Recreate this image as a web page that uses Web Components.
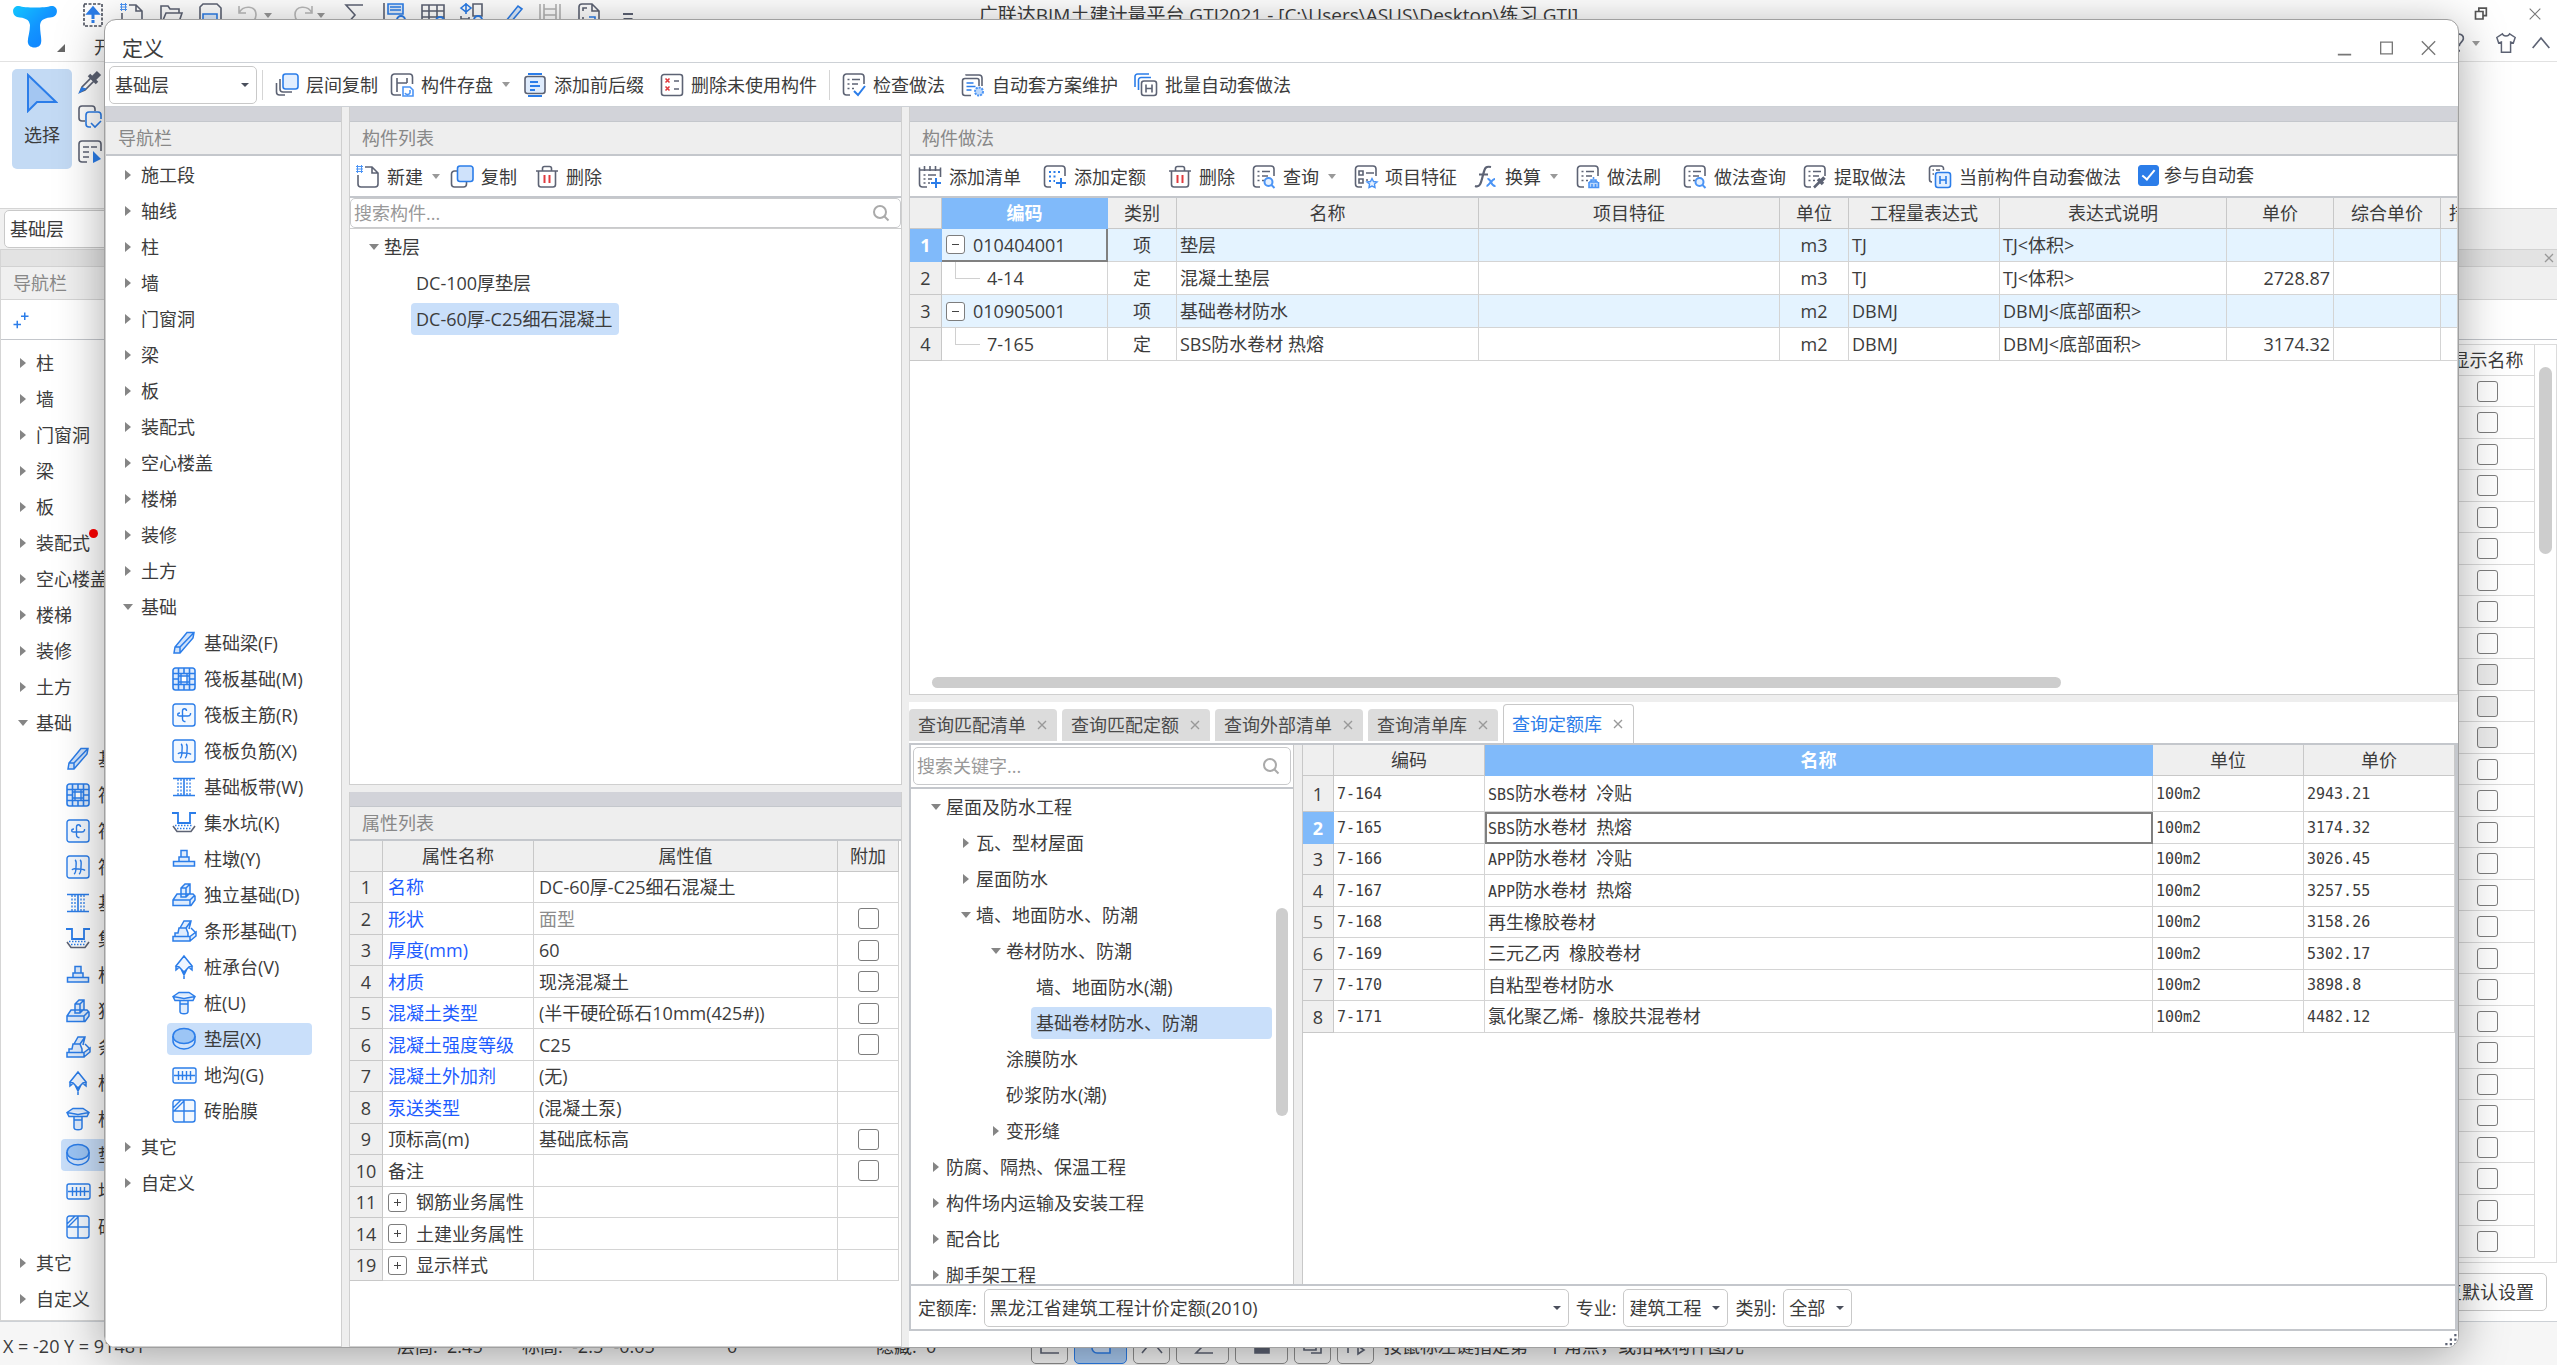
<!DOCTYPE html>
<html lang="zh-CN">
<head>
<meta charset="utf-8">
<title>广联达BIM土建计量平台 GTJ2021</title>
<style>
html, body { margin: 0; height: 100%; overflow: hidden; }
body { font: 18px/24px "Open Sans", "Noto Sans CJK SC", sans-serif; color: #3c3c3c; background: #fff; }
</style>
</head>
<body>
<gtj-app></gtj-app>
<script>
const define = (name, render) => customElements.define(name, class extends HTMLElement {
  connectedCallback() {
    if (this.shadowRoot) return;
    const root = this.attachShadow({ mode: 'open' });
    root.innerHTML = typeof render === 'function' ? render(this) : render;
  }
});

/* ---------- icons ---------- */
const D = '#5d6374', B = '#2b7de9', L = '#dfecfd';
const p = (d, c = D, f = 'none', w = 1.6) => `<path d="${d}" stroke="${c}" fill="${f}" stroke-width="${w}"/>`;
const doc = p('M8 22H4.500a3 3 0 0 1-3-3V4a3 3 0 0 1 3-3h14.500a3 3 0 0 1 3 3v7') ;
const lines = c => p('M5.500 6.500h2M10 6.500h8M5.500 11h2M10 11h6M5.500 15.500h2M10 15.500h2', c);
const lens = `<circle cx="16.500" cy="17" r="4" stroke="#4b94f5" fill="#e6f1ff" stroke-width="2"/>` + p('M19.500 20l3 3', '#4b94f5', 'none', 2);
const newdoc = p('M2 10v9a3 3 0 0 0 3 3h14a3 3 0 0 0 3-3V8l-6-6H9M16 2v6h6') + p('M0 1.500h7M0 4h7M0 6.500h7M1.500 0v8M5.500 0v8', '#4b94f5', 'none', 1);
const trash = p('M1 6h22M3.500 6v13.500a2.500 2.500 0 0 0 2.500 2.500h12a2.500 2.500 0 0 0 2.500-2.500V6M7.500 6V3.500a2 2 0 0 1 2-2h5a2 2 0 0 1 2 2V6') + p('M9.500 10v8M14.500 10v8', '#e03a3e', 'none', 2);
const ICONS = {
  layercopy: p('M8 3.500a2.500 2.500 0 0 1 2.500-2.500h10a2.500 2.500 0 0 1 2.500 2.500v10a2.500 2.500 0 0 1-2.500 2.500h-10a2.500 2.500 0 0 1-2.500-2.500z', B, '#e3efff') + p('M5 6v10a3 3 0 0 0 3 3h9M1.500 10v9a3 3 0 0 0 3 3H10'),
  store: p('M11 22H4.500a3 3 0 0 1-3-3V4a3 3 0 0 1 3-3h15a3 3 0 0 1 3 3v7M7 5v14M7 10h10M17 5v5') + p('M13 14h7l3 3v6H13zM15 20c1 2 4 2 5 0v-3', '#4b94f5'),
  prefix: p('M4.500 3.500h15a2.500 2.500 0 0 1 2.500 2.500v12a2.500 2.500 0 0 1-2.500 2.500h-15A2.500 2.500 0 0 1 2 18V6a2.500 2.500 0 0 1 2.500-2.500z', D, L) + p('M5 1h14M5 23h14M7 9h8M7 13h10M7 17h5', B, 'none', 1.8),
  unused: p('M4 1.500h16a2.500 2.500 0 0 1 2.500 2.500v16a2.500 2.500 0 0 1-2.500 2.500H4A2.500 2.500 0 0 1 1.500 20V4A2.500 2.500 0 0 1 4 1.500zM14 8h5M14 16h5') + p('M5.500 5.500l4 4M9.500 5.500l-4 4M5.500 13.500l4 4M9.500 13.500l-4 4', '#e03a3e'),
  check: doc + lines(D) + p('M12 18l4 4 7-9', B, 'none', 2),
  auto: p('M4 5.500h12a2 2 0 0 1 2 2V13M10 22.500H4a2.500 2.500 0 0 1-2.500-2.500V8A2.500 2.500 0 0 1 4 5.500M5 2.500V2h13a3 3 0 0 1 3 3v8') + p('M5.500 10h7M5.500 13.500h9M5.500 17h5', B) + `<circle cx="18" cy="18.500" r="4" stroke="#4b94f5" fill="#bcd8fb" stroke-width="2" stroke-dasharray="2 1"/>`,
  batch: p('M1 14V3.500A2.500 2.500 0 0 1 3.500 1H15M4.500 17V7A2.500 2.500 0 0 1 7 4.500h10', B) + p('M10 8h10a2.500 2.500 0 0 1 2.500 2.500V20a2.500 2.500 0 0 1-2.500 2.500H10A2.500 2.500 0 0 1 7.500 20v-9.500A2.500 2.500 0 0 1 10 8zM12 11.500v8M18 11.500v8M12 15.500h6'),
  newdoc, trash,
  copy: p('M8 6H4.500a3 3 0 0 0-3 3v10a3 3 0 0 0 3 3h9a3 3 0 0 0 3-3v-2') + p('M10 1h10.500A2.500 2.500 0 0 1 23 3.500V14a2.500 2.500 0 0 1-2.500 2.500H10A2.500 2.500 0 0 1 7.500 14V3.500A2.500 2.500 0 0 1 10 1z', B, '#cfe2fb'),
  addlist: p('M9 22H4.500a3 3 0 0 1-3-3V5h21v7M1.500 5V2.500M6.500 6V1M12 6V1M17.500 6V1M22.500 5V2.500M5.500 10h2M10 10h8M5.500 14h2M10 14h4M5.500 18h2M10 18h2') + p('M18 13v10M13 18h10', B, 'none', 2),
  addquota: doc + `<g stroke-dasharray="2 2.500">${p('M6 7h13M6 11.500h9M6 16h6', B, 'none', 2)}</g>` + p('M18 13v10M13 18h10', B, 'none', 2),
  query: doc + lines(D) + lens,
  feature: doc + p('M5 6h4v4H5zM5 14h4v4H5zM12 8h8M12 15h2') + p('M18 13.500l1.500 3 3.500.500-2.500 2 .500 3.500-3-1.500-3 1.500.500-3.500-2.500-2 3.500-.500z', '#4b94f5', '#e6f1ff', 1.4),
  fx: p('M1 21c5 2 6-3 8-11s3-9 8-8M5 9.500h9', D, 'none', 2.2) + p('M13.500 14c4-1 3 8 8 7M21 14c-3 0-6 7-8.500 7', '#4b94f5', 'none', 2),
  brush: doc + lines(D) + p('M13 17h9M15 17v-2h5v2M13 17v5.500h9.500V17M16 19v3M19.500 19v3M17.500 14v-2', '#4b94f5', '#bcd8fb'),
  extract: doc + lines(D) + p('M11 22.500l6-6', D, 'none', 2.500) + p('M15 14l5 5M17.500 16.500l4-4', D, 'none', 3.5),
  current: p('M4 17a2.500 2.500 0 0 1-2.500-2.500V3.500A2.500 2.500 0 0 1 4 1h9a2.500 2.500 0 0 1 2.500 2.500V5M4.500 5h1.500M8 5h4M4.500 9h1.500') + p('M10 7.500h10a2.500 2.500 0 0 1 2.500 2.500v10a2.500 2.500 0 0 1-2.500 2.500H10A2.500 2.500 0 0 1 7.500 20V10A2.500 2.500 0 0 1 10 7.500zM12 11v8M18 11v8M12 15h6', B, '#e3efff'),
  search: `<circle cx="11" cy="11" r="6" stroke="#aaa" fill="none" stroke-width="2"/>` + p('M15.500 15.500l4 4', '#aaa', 'none', 2),
  beam: p('M2 22l1-6L15 1.500h7L21 7 8 22zM2.500 16H8v6M8 16L22 1.500', B, '#cfe2fb', 1.5),
  raft: p('M3.500 1h17A2.500 2.500 0 0 1 23 3.500v17a2.500 2.500 0 0 1-2.500 2.500h-17A2.500 2.500 0 0 1 1 20.500v-17A2.500 2.500 0 0 1 3.500 1z', B, '#dceafc', 1.6) + p('M6.500 1v22M17.500 1v22M1 6.500h22M1 17.500h22M1 12h5M18 12h5M12 1v5M12 18v5', B, 'none', 1.6) + p('M9 9h6v6H9zM6.500 9H9M15 9h2.500M6.500 15H9M15 15h2.500M9 6.500V9M15 6.500V9M9 15v2.500M15 15v2.500', B, '#fff', 1.4),
  rebar: p('M3.500 1h17A2.500 2.500 0 0 1 23 3.500v17a2.500 2.500 0 0 1-2.500 2.500h-17A2.500 2.500 0 0 1 1 20.500v-17A2.500 2.500 0 0 1 3.500 1zM14.500 8c0-3-4-3-4 0v8c0 3 3 2.500 3 2.500M8 10c-3 0-3 3.500 0 3h8c3 0 2.500-3 2.500-3', B, '#f2f8ff', 1.4),
  negrebar: p('M3.500 1h17A2.500 2.500 0 0 1 23 3.500v17a2.500 2.500 0 0 1-2.500 2.500h-17A2.500 2.500 0 0 1 1 20.500v-17A2.500 2.500 0 0 1 3.500 1zM9 5c2 1 1 4 1 7s0 6-2 7M14 5c2 1 1 4 1 7s0 6-2 7M6 15c1-2 3-1 6-1s6 0 7 1.500', B, '#f2f8ff', 1.4),
  strip: p('M1 3.500h22M1 20.500h22M12 4v16', B) + `<g stroke-dasharray="2 1.500">${p('M6 4v16M9 4v16M15 4v16M18 4v16', B, 'none', 1.3)}</g>`,
  pit: p('M0 2h6v10h12V2h6', B, 'none', 1.8) + p('M1 15l4 5.500h14l4-5.500', D) + `<g stroke-dasharray="1.500 1.500">${p('M3 14.500h18M5 17.500h14', B)}</g>`,
  pier: p('M1.500 14.500h21v4.500h-21zM7 14.500V10h10v4.500M9 10V3.500h6V10', B, L, 1.5),
  isolated: p('M1 17l4-6h16l2 2v4l-4 5.500H1zM1 17h17v5M18 17l5-5M9 14V5l4-4h5v9l-4 4zM9 5h5v9M14 5l4-4', B, L, 1.5),
  footing: p('M1 17.500h17v4.500H1zM18 17.500l6-4.500v4l-6 5M3 17.500V14h3l1-5h7l2 5v3.500M8 9l4-7h7l-2 8M14 9l5-7M19 9l4 4', B, L, 1.5),
  pilecap: p('M12 1l8 10-3 1-5 5-5-5-3-1zM12 17v7M4 11v4l2.500-2M20 11v4l-2.500-2M9 14l3 6 3-6', B, '#eef5ff', 1.5),
  pile: p('M1 5.500l6-4h10l6 4-2 4H3zM1 5.500l11 2 11-2M8 9.500v11c0 3 8 3 8 0v-11zM8 13h8', B, L, 1.5),
  cushion: `<path d="M1 9v5c0 4 5 8 11 8s11-4 11-8V9" stroke="${B}" fill="#cfe2fb" stroke-width="1.500"/><ellipse cx="12" cy="9" rx="11" ry="7.500" stroke="${B}" fill="#9cc5f5" stroke-width="1.500"/>`,
  trench: p('M3 5h19a2 2 0 0 1 2 2v11a2 2 0 0 1-2 2H3a2 2 0 0 1-2-2V7a2 2 0 0 1 2-2zM6.500 8v9M10.500 8v9M14.500 8v9M18.500 8v9M2 12.500h21', B, '#f2f8ff', 1.4),
  brick: p('M3.500 1h17A2.500 2.500 0 0 1 23 3.500v17a2.500 2.500 0 0 1-2.500 2.500h-17A2.500 2.500 0 0 1 1 20.500v-17A2.500 2.500 0 0 1 3.500 1zM12 1v22M1 12h22M1 9l8-8M2 12L12 2', B, '#f2f8ff', 1.4),
  upload: `<g stroke-dasharray="3 1.500">${p('M3 1h18v22H3z', '#4a4f5c')}</g>` + p('M12 20v-3M12 16V8', B, 'none', 3) + p('M6 11l6-7 6 7z', B, B),
  folder: p('M2 22V3h7l2 3h9v4M2 22l5-12h16l-4 12z'),
  save: p('M2 22V4l3-3h14l4 4v17M6 1h12M6 22V12h12v10') + p('M5 11h14v11H5z', B, L),
  undo: p('M2 3v7h7M2 10c4-8 17-8 17 2 0 5-4 8-9 8', '#bbb'),
  redo: p('M22 3v7h-7M22 10C18 2 5 2 5 12c0 5 4 8 9 8', '#bbb'),
  sigma: p('M20 2H3l9 10-9 10h17'),
  measure: p('M2 0v22h20') + p('M6 1h15v10H6zM8 4h11M8 7h11', B, L) + `<circle cx="19" cy="17" r="4" fill="none" stroke="${B}" stroke-width="2"/>`,
  grid: p('M1 2h22v20H1zM1 8h22M1 14h22M8 2v20M16 2v20') + `<circle cx="19" cy="18" r="4" fill="#fff" stroke="${B}" stroke-width="2"/>`,
  find: p('M13 1h9v12h-9zM1 13v9h8v-8M1 16h8') + p('M6 0v11M1 5l5-4 5 4-5 4z', B) + `<circle cx="18" cy="17" r="4" fill="#fff" stroke="${B}" stroke-width="2"/>`,
  edit: p('M7 18L19 3l4 3L11 20l-5 1z', B, L) + p('M1 20c2-5 3 2 5 1'),
  film: p('M2 1v22M22 1v22M6 1v22M18 1v22M6 6h12M6 12h12M6 18h12', '#b5b5b5'),
  scan: p('M9 22H5a3 3 0 0 1-3-3V4a3 3 0 0 1 3-3h10l7 7v11M15 1v7h7M6 8V5h4M6 14v4h4') + p('M12 14h6v6', B),
  more: p('M7 11h10', D, 'none', 2) + `<path d="M7 15h10l-5 5z" fill="${D}"/>`,
  dropper: p('M2 22l2-5 9-9 3 3-9 9z', D, '#fff') + p('M11 5l8 8', D, 'none', 3.5) + p('M15 9l6-6', D, 'none', 6) + p('M2 22l2-4 3 1z', B, B),
  picks: p('M7 16H4a3 3 0 0 1-3-3V4a3 3 0 0 1 3-3h10a3 3 0 0 1 3 3v2') + p('M13 22h-2a3 3 0 0 1-3-3v-9a3 3 0 0 1 3-3h9a3 3 0 0 1 3 3v4M13 18l4 4 6-6', B),
  listpick: p('M9 22H4a3 3 0 0 1-3-3V4a3 3 0 0 1 3-3h16a3 3 0 0 1 3 3v7M5 7h6M13 7h6M5 12h6M5 17h6') + `<path d="M15 11l8 8-8 4z" fill="${B}"/>`,
  sparkle: p('M17 2v10M12 7h10M7 13v10M2 18h10', B, 'none', 2),
  shirt: p('M8 2c1 3 7 3 8 0l6 4-2 6-3-1v11H7V11l-3 1-2-6z'),
  help: p('M5 7c0-8 12-7 11 0-.500 4-5 4-5 9M11 20v2.500', D, 'none', 2) ,
  chevron: p('M2 18L12 6l10 12', D, 'none', 2),
  min: p('M1 20h16', '#777', 'none', 2),
  max: p('M2 5h14v14H2z', '#777'),
  close: p('M1 4l16 16M17 4L1 20', '#777'),
  restore: p('M3 9h9v9H3zM7 9V5h9v9h-4', '#555', 'none', 2),
  x: p('M6 6l12 12M18 6L6 18', '#999', 'none', 2),
  grip: `<g fill="#5d6374"><path d="M19 4h3v3h-3zM13 10h3v3h-3zM19 10h3v3h-3zM7 16h3v3H7zM13 16h3v3h-3zM19 16h3v3h-3z"/></g>`,
  s1: p('M3 5v14h18M3 12h14'), s2: p('M3 5h13a5 5 0 0 1 5 5v9H8a5 5 0 0 1-5-5z', B, '#cfe2fb'), s3: p('M2 19L12 7l10 12'),
  s4: p('M20 4L5 19h17'), s5: p('M5 7h14v12H5z', D, D), s6: p('M3 6h12v10H3zM8 10h12v9H10'), s7: p('M4 19V6h12M14 12v8l6-4z')
};
define('ui-icon', el => `<style>
:host { display: block; flex: none; width: 24px; height: 24px; }
svg { display: block; width: 100%; height: 100%; overflow: visible; }
</style><svg viewBox="0 0 24 24" aria-hidden="true">${ICONS[el.getAttribute('name')] || ''}</svg>`);

define('ui-caret', `<style>
:host { display: flex; align-items: center; justify-content: center; flex: none; width: 11px; }
i { border: 4px solid transparent; border-top: 5px solid #999; border-bottom: 0; }
</style><i></i>`);

/* ---------- controls ---------- */
define('tool-button', el => `<style>
:host { display: block; flex: none; margin-right: var(--gap-s, 16px); }
:host([wide]) { margin-right: var(--gap-l, 22px); }
button { all: unset; display: flex; align-items: center; white-space: nowrap; }
ui-icon { margin-right: 7px; }
ui-caret { margin-left: 7px; }
</style><button type="button"><ui-icon name="${el.getAttribute('icon')}"></ui-icon><slot></slot>${el.hasAttribute('menu') ? '<ui-caret></ui-caret>' : ''}</button>`);

define('ui-select', el => `<style>
:host { display: flex; align-items: center; gap: 7px; flex: none; }
.box { display: grid; width: var(--w, 148px); height: 38px; }
select { grid-area: 1/1; appearance: none; box-sizing: border-box; width: 100%; margin: 0; padding: 0 0 0 5px; font: inherit; color: inherit; background: #fff; border: 1px solid #c9c9c9; border-radius: 5px; outline: 0; }
i { grid-area: 1/1; justify-self: end; align-self: center; margin-right: 8px; border: 4px solid transparent; border-top: 4px solid #4a4f5c; border-bottom: 0; pointer-events: none; }
</style>${el.hasAttribute('label') ? `<label for="s">${el.getAttribute('label')}</label>` : ''}<span class="box"><select id="s" ${el.hasAttribute('label') ? '' : 'aria-label="楼层"'}><option>${el.getAttribute('value')}</option></select><i></i></span>`);

define('search-box', el => `<style>
:host { display: block; }
div { display: flex; align-items: center; box-sizing: border-box; height: var(--h, 30px); padding: 0 7px 0 3px; border: 1px solid #c9cacc; border-radius: 5px; background: #fff; }
input { flex: 1; min-width: 0; border: 0; outline: 0; padding: 0; font: inherit; background: none; }
input::placeholder { color: #999; opacity: 1; }
</style><div><input type="search" aria-label="${el.getAttribute('hint')}" placeholder="${el.getAttribute('hint')}"><ui-icon name="search"></ui-icon></div>`);

const CHECK_CSS = `
input[type=checkbox] { appearance: none; display: block; box-sizing: border-box; flex: none; width: 21px; height: 21px; margin: 0 auto; border: 1px solid #7d7d7d; border-radius: 3px; background: #fff; }
input[type=checkbox]:disabled { background: #ececec; }
input[type=checkbox]:checked { display: grid; place-content: center; background: #2b7de9; border-color: #2b7de9; }
input[type=checkbox]:checked::after { content: ""; width: 5px; height: 11px; border: solid #fff; border-width: 0 2px 2px 0; rotate: 40deg; translate: 0 -2px; }`;
define('ui-check', `<style>${CHECK_CSS}
:host { display: block; flex: none; align-self: flex-start; margin-top: 6px; }
label { display: flex; align-items: center; gap: 5px; }
</style><label><input type="checkbox" checked><slot></slot></label>`);

/* ---------- tree ---------- */
const NAV = ['柱', '墙', '门窗洞', '梁', '板', '装配式', '空心楼盖', '楼梯', '装修', '土方'].map(t => [0, t, 'r']);
const BASE = [[0, '基础', 'd'],
  ...[['基础梁(F)', 'beam'], ['筏板基础(M)', 'raft'], ['筏板主筋(R)', 'rebar'], ['筏板负筋(X)', 'negrebar'], ['基础板带(W)', 'strip'], ['集水坑(K)', 'pit'], ['柱墩(Y)', 'pier'], ['独立基础(D)', 'isolated'], ['条形基础(T)', 'footing'], ['桩承台(V)', 'pilecap'], ['桩(U)', 'pile'], ['垫层(X)', 'cushion', 1], ['地沟(G)', 'trench'], ['砖胎膜', 'brick']].map(([t, i, s]) => [1, t, '', s, i]),
  [0, '其它', 'r'], [0, '自定义', 'r']];
const TREES = {
  main: [...NAV, ...BASE],
  nav: [[0, '施工段', 'r'], [0, '轴线', 'r'], ...NAV, ...BASE],
  parts: [[0, '垫层', 'd'], [1, 'DC-100厚垫层', ''], [1, 'DC-60厚-C25细石混凝土', '', 1]],
  quota: [[0, '屋面及防水工程', 'd'], [1, '瓦、型材屋面', 'r'], [1, '屋面防水', 'r'], [1, '墙、地面防水、防潮', 'd'], [2, '卷材防水、防潮', 'd'], [3, '墙、地面防水(潮)', ''], [3, '基础卷材防水、防潮', '', 1], [2, '涂膜防水', ''], [2, '砂浆防水(潮)', ''], [2, '变形缝', 'r'], [0, '防腐、隔热、保温工程', 'r'], [0, '构件场内运输及安装工程', 'r'], [0, '配合比', 'r'], [0, '脚手架工程', 'r']]
};
define('tree-view', el => {
  const kind = el.getAttribute('data');
  return `<style>
:host { display: block; overflow: hidden; }
ul { list-style: none; margin: 0; padding: 0; }
li { display: flex; align-items: center; height: 36px; padding-left: calc(var(--pad) + var(--lv) * var(--step)); white-space: nowrap; }
.tw { flex: none; display: flex; justify-content: center; width: var(--tw); }
.r i { display: block; border: 5px solid transparent; border-left: 6px solid #858585; border-right: 0; }
.d i { display: block; border: 5px solid transparent; border-top: 6px solid #858585; border-bottom: 0; }
.it { display: flex; align-items: center; gap: 8px; height: 32px; margin-left: -5px; padding: 0 6px 0 5px; border-radius: 4px; }
.on { background: #c9dffa; }
.fill .on { flex: 1; margin-right: var(--end); }
.dot { align-self: flex-start; width: 9px; height: 9px; margin: 4px 0 0 -7px; border-radius: 50%; background: #f00; }
</style><ul class="${kind === 'parts' ? '' : 'fill'}">${TREES[kind].map(([lv, t, a, on, ic]) =>
    `<li style="--lv:${lv}"><span class="tw ${a}">${a ? '<i></i>' : ''}</span><span class="it ${on ? 'on' : ''}">${ic ? `<ui-icon name="${ic}"></ui-icon>` : ''}<span>${t}</span></span>${kind === 'main' && t === '装配式' ? '<span class="dot"></span>' : ''}</li>`).join('')}</ul>`;
});

/* ---------- docked pane ---------- */
define('dock-pane', el => `<style>
:host { display: flex; flex-direction: column; min-height: 0; min-width: 0; background: #fff; border: 1px solid #cfcfcf; border-top: 0; box-sizing: border-box; overflow: hidden; }
.strip { flex: none; height: 15px; background: #d2d3d9; border-bottom: 1px solid #c4c7cc; box-sizing: border-box; }
h2 { flex: none; margin: 0; padding: 0 12px; font: inherit; line-height: 32px; color: #888; background: #eee; border-bottom: 2px solid #c4c7cc; }
</style><div class="strip"></div><h2>${el.getAttribute('head')}</h2><slot></slot>`);

/* ---------- tables ---------- */
const TABLE_CSS = `
table { border-collapse: separate; border-spacing: 0; table-layout: fixed; width: 100%; }
th, td { box-sizing: border-box; padding: 0 3px; border: solid #d4d4d4; border-width: 0 1px 1px 0; font-weight: 400; text-align: left; white-space: nowrap; overflow: hidden; height: inherit; }
thead th { text-align: center; background: #efefef; border-color: #c8c8c8; padding: 0; }
tbody th { text-align: center; background: #efefef; border-color: #c8c8c8; padding: 0; }
thead th.hot { background: #80bafa; border-color: #80bafa; color: #fff; font-weight: 700; }
tbody th.hot { background: #80bafa; border-color: #80bafa; color: #fff; font-weight: 700; }
.c { text-align: center; } .n { text-align: right; }
.box { flex: none; display: inline-grid; place-content: center; box-sizing: border-box; width: 19px; height: 19px; border: 1px solid #7d7d7d; border-radius: 3px; background: #fff; }
.box::before { content: ""; grid-area: 1/1; width: 7px; height: 1px; background: #444; align-self: center; }
.box.plus::after { content: ""; grid-area: 1/1; width: 1px; height: 7px; background: #444; justify-self: center; }
.row { display: flex; align-items: center; }`;

define('method-table', () => {
  const rows = [['010404001', '项', '垫层', 'm3', 'TJ', 'TJ&lt;体积&gt;', '', 1], ['4-14', '定', '混凝土垫层', 'm3', 'TJ', 'TJ&lt;体积&gt;', '2728.87', 0], ['010905001', '项', '基础卷材防水', 'm2', 'DBMJ', 'DBMJ&lt;底部面积&gt;', '', 1], ['7-165', '定', 'SBS防水卷材 热熔', 'm2', 'DBMJ', 'DBMJ&lt;底部面积&gt;', '3174.32', 0]];
  return `<style>${TABLE_CSS}
:host { display: block; flex: 1; overflow: hidden; }
table { width: 1621px; }
thead tr { height: 31px; } tbody tr { height: 33px; }
tr.g td { background: #e4f3ff; }
td.code { padding: 0; }
.g .row { padding-left: 4px; gap: 8px; }
.sub { height: 32px; padding-left: 13px; gap: 7px; }
.sub i { align-self: flex-start; width: 24px; height: 16px; border: solid #d0d0d0; border-width: 0 0 1px 1px; }
tr:first-child td.code { border-right: 2px solid #808080; border-bottom: 2px solid #808080; }
th:last-child { text-align: left; padding-left: 8px; }
</style><table><colgroup>${[32, 166, 69, 302, 301, 69, 151, 227, 107, 107, 90].map(w => `<col style="width:${w}px">`).join('')}</colgroup>
<thead><tr><th></th><th class="hot">编码</th>${['类别', '名称', '项目特征', '单位', '工程量表达式', '表达式说明', '单价', '综合单价', '措施项目'].map(t => `<th>${t}</th>`).join('')}</tr></thead>
<tbody>${rows.map((r, i) => `<tr class="${r[7] ? 'g' : ''}"><th class="${i ? '' : 'hot'}">${i + 1}</th><td class="code">${r[7] ? `<div class="row"><span class="box"></span>${r[0]}</div>` : `<div class="row sub"><i></i>${r[0]}</div>`}</td><td class="c">${r[1]}</td><td>${r[2]}</td><td></td><td class="c">${r[3]}</td><td>${r[4]}</td><td>${r[5]}</td><td class="n">${r[6]}</td><td></td><td></td></tr>`).join('')}</tbody></table>`;
});

define('prop-table', () => {
  const rows = [[1, '名称', 'DC-60厚-C25细石混凝土', 0, 1], [2, '形状', '面型', 1, 1], [3, '厚度(mm)', '60', 1, 1], [4, '材质', '现浇混凝土', 1, 1], [5, '混凝土类型', '(半干硬砼砾石10mm(425#))', 1, 1], [6, '混凝土强度等级', 'C25', 1, 1], [7, '混凝土外加剂', '(无)', 0, 1], [8, '泵送类型', '(混凝土泵)', 0, 1], [9, '顶标高(m)', '基础底标高', 1, 0], [10, '备注', '', 1, 0], [11, '钢筋业务属性'], [14, '土建业务属性'], [19, '显示样式']];
  return `<style>${TABLE_CSS}${CHECK_CSS}
:host { display: block; flex: 1; overflow: hidden; padding-right: 2px; }
tr { height: 31px; } tbody tr:nth-child(even) { height: 32px; }
td { padding: 0 5px; }
.blue { color: #1d5cff; } .off { color: #8c8c8c; }
.row { gap: 9px; }
</style><table><colgroup><col style="width:33px"><col style="width:151px"><col><col style="width:61px"></colgroup>
<thead><tr><th></th><th>属性名称</th><th>属性值</th><th>附加</th></tr></thead>
<tbody>${rows.map(([n, k, v, c, b]) => `<tr><th>${n}</th><td class="${b ? 'blue' : ''}">${v === undefined ? `<div class="row"><span class="box plus"></span>${k}</div>` : k}</td><td class="${n === 2 ? 'off' : ''}">${v || ''}</td><td>${c ? `<input type="checkbox" aria-label="附加 ${k}">` : ''}</td></tr>`).join('')}</tbody></table>`;
});

define('quota-table', () => {
  const rows = [['SBS', '防水卷材', '冷贴', '2943.21'], ['SBS', '防水卷材', '热熔', '3174.32'], ['APP', '防水卷材', '冷贴', '3026.45'], ['APP', '防水卷材', '热熔', '3257.55'], ['', '再生橡胶卷材', '', '3158.26'], ['', '三元乙丙', '橡胶卷材', '5302.17'], ['', '自粘型卷材防水', '', '3898.8'], ['', '氯化聚乙烯-', '橡胶共混卷材', '4482.12']];
  return `<style>${TABLE_CSS}
:host { display: block; flex: 1; min-width: 0; overflow: hidden; background: #fff; border-left: 1px solid #c8c8c8; }
tr { height: 31px; } tbody tr:nth-child(even) { height: 32px; } tbody tr:first-child { height: 36px; }
td.m, .m { font-family: "DejaVu Sans Mono", monospace; font-size: 15px; }
tr:nth-child(2) td.nm { outline: 2px solid #808080; outline-offset: -2px; }
</style><table><colgroup><col style="width:31px"><col style="width:151px"><col><col style="width:151px"><col style="width:151px"></colgroup>
<thead><tr><th></th><th>编码</th><th class="hot">名称</th><th>单位</th><th>单价</th></tr></thead>
<tbody>${rows.map((r, i) => `<tr><th class="${i === 1 ? 'hot' : ''}">${i + 1}</th><td class="m">7-${164 + i}</td><td class="nm">${r[0] ? `<span class="m">${r[0]}</span>` : ''}${r[1]}${r[2] ? `<span class="m"> </span>${r[2]}` : ''}</td><td class="m">100m2</td><td class="m">${r[3]}</td></tr>`).join('')}</tbody></table>`;
});

/* ---------- query area ---------- */
define('query-tabs', () => `<style>
:host { display: flex; align-items: flex-end; gap: 5px; flex: none; height: 41px; background: #fff; }
button { all: unset; display: flex; align-items: center; gap: 8px; height: 32px; margin-bottom: 2px; padding: 0 7px 0 9px; background: #dcdcdc; border-radius: 4px 4px 0 0; color: #4a4a4a; }
button[aria-selected=true] { height: 38px; margin-bottom: 0; padding: 0 7px 0 8px; background: #fff; color: #2b7de9; border: 1px solid #c8c8c8; border-bottom: 0; }
ui-icon { width: 16px; height: 16px; }
</style>${['查询匹配清单', '查询匹配定额', '查询外部清单', '查询清单库', '查询定额库'].map((t, i) => `<button role="tab" aria-selected="${i === 4}">${t}<ui-icon name="x"></ui-icon></button>`).join('')}`);

define('query-pane', `<style>
:host { display: flex; flex-direction: column; min-height: 0; background: #fff; }
.frame { flex: 1; min-height: 0; display: flex; flex-direction: column; border: solid #c4c7cc; border-width: 2px 3px 2px 2px; }
.mid { flex: 1; min-height: 0; display: flex; background: #eee; gap: 8px; }
.side { flex: none; width: 383px; display: flex; flex-direction: column; background: #fff; border-right: 1px solid #c8c8c8; box-sizing: border-box; }
search-box { --h: 38px; padding: 2px; border-bottom: 2px solid #c4c7cc; }
.wrap { flex: 1; min-height: 0; display: flex; }
tree-view { flex: 1; --pad: 15px; --step: 30px; --tw: 20px; --end: 4px; }
.bar { flex: none; width: 12px; margin-right: 5px; }
.bar i { display: block; height: 42%; border-radius: 6px; background: #cdcdcd; }
.bar::before { content: ""; display: block; height: 24%; }
.foot { flex: none; display: flex; align-items: center; gap: 7px; height: 43px; padding-left: 7px; border-top: 2px solid #c4c7cc; }
.grip { flex: none; display: flex; justify-content: flex-end; height: 16px; }
.grip ui-icon { width: 18px; height: 18px; }
</style><query-tabs role="tablist"></query-tabs>
<div class="frame"><div class="mid"><div class="side"><search-box hint="搜索关键字..."></search-box><div class="wrap"><tree-view data="quota"></tree-view><div class="bar"><i></i></div></div></div><quota-table></quota-table></div>
<div class="foot"><ui-select label="定额库:" value="黑龙江省建筑工程计价定额(2010)" style="--w:585px"></ui-select><ui-select label="专业:" value="建筑工程" style="--w:105px"></ui-select><ui-select label="类别:" value="全部" style="--w:69px"></ui-select></div></div>
<div class="grip"><ui-icon name="grip"></ui-icon></div>`);

/* ---------- definition window ---------- */
define('define-window', `<style>
:host { display: flex; flex-direction: column; box-sizing: border-box; border: 1px solid #a0a0a0; border-radius: 12px; overflow: hidden; background: #fff; box-shadow: 0 8px 48px rgba(0,0,0,.34); }
header { flex: none; display: flex; align-items: center; height: 42px; padding: 14px 17px 0 17px; box-sizing: border-box; }
h1 { flex: 1; margin: 0; font: inherit; font-size: 21px; }
header button { all: unset; margin-left: 22px; }
header ui-icon { width: 20px; height: 24px; }
.tools { flex: none; display: flex; align-items: center; }
.top { height: 43px; padding-left: 4px; border: solid #cdd1d6; border-width: 1px 0; --gap-s: 12px; --gap-l: 16px; box-sizing: content-box; }
.sep { width: 1px; height: 30px; margin-right: 12px; background: #d5d5d5; }
.top ui-select { margin-right: 5px; }
.body { flex: 1; min-height: 0; display: grid; grid-template-columns: 237px 553px minmax(0, 1fr); gap: 7px; background: #eee; }
.col { display: grid; min-height: 0; gap: 7px; }
.left { grid-template-rows: minmax(0, 55fr) minmax(0, 45fr); }
.right { grid-template-rows: minmax(0, 477fr) minmax(0, 523fr); }
.pt { height: 39px; padding: 1px 0 0 6px; border-bottom: 2px solid #c4c7cc; --gap-s: 9px; --gap-l: 18px; }
.mt { height: 39px; padding: 1px 0 0 8px; border-bottom: 2px solid #c4c7cc; --gap-s: 17px; }
.nav { padding-top: 1px; --pad: 8px; --step: 31px; --tw: 27px; --end: 29px; }
.parts { flex: 1; border-top: 1px solid #cfcfcf; --pad: 14px; --step: 32px; --tw: 20px; }
.hbar { flex: none; padding: 0 0 6px 22px; }
.hbar i { display: block; width: 74%; height: 11px; border-radius: 6px; background: #cdcdcd; }
</style>
<header><h1>定义</h1><button aria-label="最小化"><ui-icon name="min"></ui-icon></button><button aria-label="最大化"><ui-icon name="max"></ui-icon></button><button aria-label="关闭"><ui-icon name="close"></ui-icon></button></header>
<div class="tools top"><ui-select value="基础层"></ui-select><span class="sep"></span><tool-button icon="layercopy">层间复制</tool-button><tool-button icon="store" menu>构件存盘</tool-button><tool-button icon="prefix" wide>添加前后缀</tool-button><tool-button icon="unused">删除未使用构件</tool-button><span class="sep"></span><tool-button icon="check" wide>检查做法</tool-button><tool-button icon="auto" wide>自动套方案维护</tool-button><tool-button icon="batch">批量自动套做法</tool-button></div>
<div class="body">
<dock-pane head="导航栏"><tree-view class="nav" data="nav"></tree-view></dock-pane>
<div class="col left">
<dock-pane head="构件列表"><div class="tools pt"><tool-button icon="newdoc" menu>新建</tool-button><tool-button icon="copy" wide>复制</tool-button><tool-button icon="trash">删除</tool-button></div><search-box hint="搜索构件..."></search-box><tree-view class="parts" data="parts"></tree-view></dock-pane>
<dock-pane head="属性列表"><prop-table></prop-table></dock-pane>
</div>
<div class="col right">
<dock-pane head="构件做法"><div class="tools mt"><tool-button icon="addlist" wide>添加清单</tool-button><tool-button icon="addquota" wide>添加定额</tool-button><tool-button icon="trash">删除</tool-button><tool-button icon="query" menu>查询</tool-button><tool-button icon="feature">项目特征</tool-button><tool-button icon="fx" menu>换算</tool-button><tool-button icon="brush" wide>做法刷</tool-button><tool-button icon="query">做法查询</tool-button><tool-button icon="extract" wide>提取做法</tool-button><tool-button icon="current">当前构件自动套做法</tool-button><ui-check>参与自动套</ui-check></div><method-table></method-table><div class="hbar"><i></i></div></dock-pane>
<query-pane></query-pane>
</div>
</div>`);

/* ---------- application behind the window ---------- */
define('app-header', () => `<style>
:host { display: grid; grid-template-columns: 1fr auto 1fr; height: 61px; border-bottom: 1px solid #e2e2e2; }
.l { display: flex; }
.logo { flex: none; display: flex; align-items: flex-end; width: 81px; }
.logo svg { width: 44px; height: 44px; margin: 0 0 12px 13px; }
.logo i { margin-bottom: 9px; border: 4px solid transparent; border-right-color: #666; border-bottom-color: #666; }
.quick { display: flex; gap: 15px; padding-top: 3px; }
.quick span { display: flex; }
.quick ui-caret { width: 14px; }
.tab { padding: 8px 0 0 13px; }
.title { padding-top: 3px; font-size: 19px; white-space: nowrap; }
.r { display: flex; flex-direction: column; align-items: flex-end; gap: 7px; }
.r div { display: flex; align-items: center; }
.win { gap: 36px; padding: 3px 12px 0 0; } .hp { gap: 13px; padding-right: 6px; }
.win ui-icon { width: 20px; height: 22px; }
.win ui-icon:last-child { width: 16px; height: 16px; }
.hp span { display: flex; }
.hp ui-icon { width: 20px; height: 20px; } .hp .s { width: 24px; height: 22px; }
</style><div class="l"><div class="logo"><svg viewBox="0 0 44 44" aria-hidden="true"><defs><linearGradient id="g" x1="0" y1="0" x2="1" y2="1"><stop offset="0" stop-color="#12c6ff"/><stop offset=".5" stop-color="#1295ff"/><stop offset="1" stop-color="#0f7bff"/></linearGradient></defs><path fill="url(#g)" d="M6 1C12 3 32 3 38 1c7-1 8 9 2 11-8 1-12 2-13 8 0 8 2 14 1 18-1 6-12 6-13 0-1-4 2-10 2-18-1-6-5-7-13-8C-2 10-1 0 6 1z"/></svg><i></i></div><div><div class="quick">${['upload', 'newdoc', 'folder', 'save'].map(n => `<ui-icon name="${n}"></ui-icon>`).join('')}<span><ui-icon name="undo"></ui-icon><ui-caret></ui-caret></span><span><ui-icon name="redo"></ui-icon><ui-caret></ui-caret></span>${['sigma', 'measure', 'grid', 'find', 'edit', 'film', 'scan', 'more'].map(n => `<ui-icon name="${n}"></ui-icon>`).join('')}</div><div class="tab">开始</div></div></div>
<div class="title">广联达BIM土建计量平台 GTJ2021 - [C:\\Users\\ASUS\\Desktop\\练习.GTJ]</div>
<div class="r"><div class="win"><ui-icon name="min"></ui-icon><ui-icon name="restore"></ui-icon><ui-icon name="close"></ui-icon></div><div class="hp"><span><ui-icon name="help"></ui-icon><ui-caret></ui-caret></span><ui-icon class="s" name="shirt"></ui-icon><ui-icon name="chevron"></ui-icon></div></div>`);

define('show-table', () => `<style>${TABLE_CSS}${CHECK_CSS}
:host { display: flex; flex: 1; min-height: 0; overflow: hidden; margin-top: 4px; border: solid #dcdcdc; border-width: 1px 1px 1px 0; }
table { flex: 1; align-self: flex-start; }
thead th, th, td { background: none; border-color: #dadada; }
thead tr { height: 31px; } tbody tr { height: 31px; } tbody tr:nth-child(even) { height: 32px; }
.bar { flex: none; width: 13px; height: 187px; margin: 22px 4px 0; border-radius: 7px; background: #cdcdcd; }
</style><table><colgroup><col><col style="width:94px"></colgroup><thead><tr><th></th><th>显示名称</th></tr></thead><tbody>${Array.from({ length: 28 }, (_, i) => `<tr><td></td><td><input type="checkbox" aria-label="显示名称 ${i + 1}" ${i > 8 && i < 12 ? 'disabled' : ''}></td></tr>`).join('')}</tbody></table><div class="bar"></div>`);

define('gtj-app', `<style>
:host { position: relative; display: flex; flex-direction: column; height: 100vh; overflow: hidden; background: #fff; }
.ribbon { flex: none; display: flex; gap: 6px; height: 100px; padding: 7px 0 39px 12px; border-bottom: 1px solid #d5d5d5; }
.ribbon button { all: unset; display: flex; flex-direction: column; align-items: center; gap: 10px; width: 60px; height: 100px; background: #c3daf4; border-radius: 5px; }
.ribbon svg { width: 32px; height: 40px; margin-top: 4px; }
.mini { display: flex; flex-direction: column; gap: 11px; padding-top: 1px; }
.floor { flex: none; display: flex; align-items: center; height: 40px; padding-left: 4px; background: #f0f0f0; }
.main { flex: 1; min-height: 0; display: flex; justify-content: space-between; }
.pane { display: flex; flex-direction: column; width: 300px; border-left: 1px solid #d5d5d5; box-sizing: border-box; }
.strip { flex: none; display: flex; justify-content: flex-end; align-items: center; height: 16px; background: #e3e3e3; border: solid #d2d2d2; border-width: 1px 0; }
.strip ui-icon { width: 16px; height: 16px; }
.head { flex: none; height: 32px; padding-left: 12px; line-height: 32px; color: #888; background: #f0f0f0; border-bottom: 1px solid #d5d5d5; }
.plus { flex: none; height: 39px; padding: 0 0 0 11px; display: flex; align-items: center; border-bottom: 1px solid #c4c7cc; }
.plus ui-icon { width: 18px; height: 18px; }
tree-view { flex: 1; border-bottom: 1px solid #d5d5d5; padding-top: 5px; --pad: 8px; --step: 30px; --tw: 27px; --end: 29px; }
.act { flex: none; display: flex; justify-content: flex-end; padding: 10px 10px; }
.act button { box-sizing: border-box; height: 38px; padding: 0 12px; font: inherit; color: inherit; background: #fff; border: 1px solid #c9c9c9; border-radius: 5px; }
footer { flex: none; display: grid; grid-template-columns: 394px 125px 205px 149px 155px auto 1fr; align-items: center; height: 44px; padding-left: 3px; background: #f6f6f6; border-top: 1px solid #cdd1d6; white-space: nowrap; box-sizing: border-box; padding-top: 5px; }
.btns { display: flex; gap: 6px; padding-right: 10px; }
.btns button { box-sizing: border-box; display: grid; place-content: center; width: 37px; height: 36px; padding: 0; background: none; border: 1px solid #8f8f8f; border-radius: 5px; }
.btns .w { width: 53px; }
.btns .on { background: #a8c9f0; border-color: #2b7de9; }
define-window { position: absolute; inset: 19px 98px 17px 104px; }
</style>
<app-header></app-header>
<div class="ribbon"><button type="button"><svg viewBox="0 0 32 40" aria-hidden="true"><path d="M2 2v36l9-9h19z" fill="#a3c6f2" stroke="#2b7de9" stroke-width="2"/></svg>选择</button><div class="mini"><ui-icon name="dropper"></ui-icon><ui-icon name="picks"></ui-icon><ui-icon name="listpick"></ui-icon></div></div>
<div class="floor"><ui-select value="基础层"></ui-select></div>
<div class="main">
<div class="pane"><div class="strip"></div><div class="head">导航栏</div><div class="plus"><ui-icon name="sparkle"></ui-icon></div><tree-view data="main"></tree-view></div>
<div class="pane"><div class="strip"><ui-icon name="x"></ui-icon></div><div class="head"></div><div class="plus"></div><show-table></show-table><div class="act"><button type="button">恢复默认设置</button></div></div>
</div>
<footer><span>X = -20 Y = 91481</span><span>层高:&nbsp; 2.45</span><span>标高:&nbsp; -2.5~-0.05</span><span>0</span><span>隐藏:&nbsp; 0</span><span class="btns">${['s1', 's2', 's3', 's4', 's5', 's6', 's7'].map((n, i) => `<button type="button" aria-label="捕捉 ${i + 1}" class="${[1, 3, 4].includes(i) ? 'w' : ''} ${i === 1 ? 'on' : ''}"><ui-icon name="${n}"></ui-icon></button>`).join('')}</span><span>按鼠标左键指定第一个角点，或拾取构件图元</span></footer>
<define-window></define-window>`);
</script>
</body>
</html>
